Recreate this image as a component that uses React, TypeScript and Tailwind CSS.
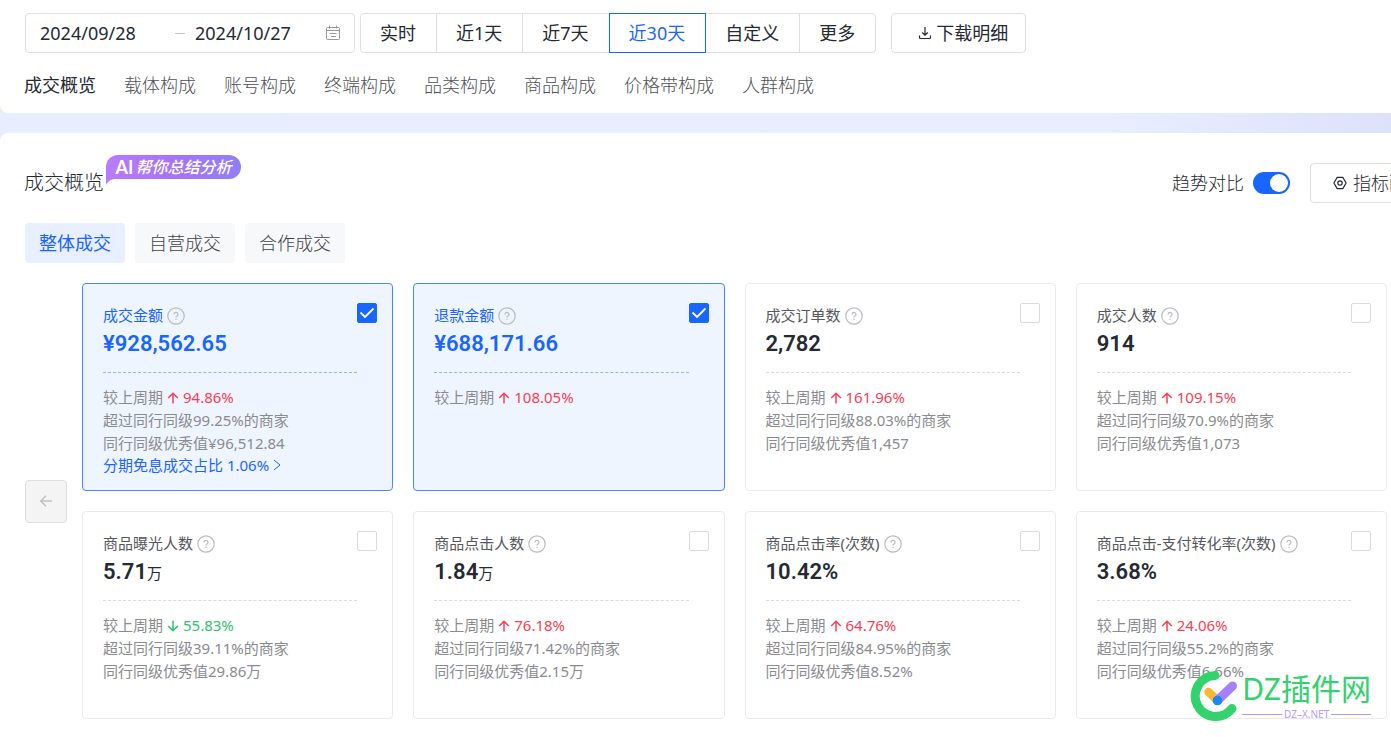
import { useState } from 'react';
import clsx from 'clsx';

interface Metric {
  id: string;
  label: string;
  value: string;
  unit?: string;
  trend: 'up' | 'down';
  change: string;
  lines?: string[];
  link?: string;
}

const RANGES = ['实时', '近1天', '近7天', '近30天', '自定义', '更多'];

const SECTIONS = ['成交概览', '载体构成', '账号构成', '终端构成', '品类构成', '商品构成', '价格带构成', '人群构成'];

const SCOPES = ['整体成交', '自营成交', '合作成交'];

const METRICS: Metric[] = [
  {
    id: 'amount',
    label: '成交金额',
    value: '¥928,562.65',
    trend: 'up',
    change: '94.86%',
    lines: ['超过同行同级99.25%的商家', '同行同级优秀值¥96,512.84'],
    link: '分期免息成交占比 1.06%',
  },
  { id: 'refund', label: '退款金额', value: '¥688,171.66', trend: 'up', change: '108.05%' },
  {
    id: 'orders',
    label: '成交订单数',
    value: '2,782',
    trend: 'up',
    change: '161.96%',
    lines: ['超过同行同级88.03%的商家', '同行同级优秀值1,457'],
  },
  {
    id: 'buyers',
    label: '成交人数',
    value: '914',
    trend: 'up',
    change: '109.15%',
    lines: ['超过同行同级70.9%的商家', '同行同级优秀值1,073'],
  },
  {
    id: 'exposure',
    label: '商品曝光人数',
    value: '5.71',
    unit: '万',
    trend: 'down',
    change: '55.83%',
    lines: ['超过同行同级39.11%的商家', '同行同级优秀值29.86万'],
  },
  {
    id: 'clicks',
    label: '商品点击人数',
    value: '1.84',
    unit: '万',
    trend: 'up',
    change: '76.18%',
    lines: ['超过同行同级71.42%的商家', '同行同级优秀值2.15万'],
  },
  {
    id: 'ctr',
    label: '商品点击率(次数)',
    value: '10.42%',
    trend: 'up',
    change: '64.76%',
    lines: ['超过同行同级84.95%的商家', '同行同级优秀值8.52%'],
  },
  {
    id: 'cvr',
    label: '商品点击-支付转化率(次数)',
    value: '3.68%',
    trend: 'up',
    change: '24.06%',
    lines: ['超过同行同级55.2%的商家', '同行同级优秀值6.66%'],
  },
];

const CalendarIcon = () => (
  <svg viewBox="0 0 16 16" className="h-4 w-4 shrink-0" fill="none" stroke="#96999e" aria-hidden="true">
    <path d="M2.500 2.500h11a1 1 0 0 1 1 1v10a1 1 0 0 1-1 1h-11a1 1 0 0 1-1-1v-10a1 1 0 0 1 1-1zM1.500 5.500h13M4.500 .5v3M11.500 .5v3M4.500 8.500h7M6 11.500h5" />
  </svg>
);

const DownloadIcon = () => (
  <svg viewBox="0 0 14 14" className="h-3.5 w-3.5" fill="none" stroke="currentColor" strokeWidth="1.2" aria-hidden="true">
    <path d="M7 1v8M4.200 6.500 7 9.200l2.800-2.700M1.500 9.500v2a1 1 0 0 0 1 1h9a1 1 0 0 0 1-1v-2" />
  </svg>
);

const SettingIcon = () => (
  <svg viewBox="0 0 14 14" className="h-3.5 w-3.5" fill="none" stroke="currentColor" strokeWidth="1.2" aria-hidden="true">
    <path d="M4.2 1.4h5.6L13.1 7l-3.3 5.6H4.2L.9 7z" strokeLinejoin="round" />
    <circle cx="7" cy="7" r="2.2" />
  </svg>
);

const HelpIcon = () => (
  <svg viewBox="0 0 18 18" className="h-[18px] w-[18px]" fill="none" stroke="#b9bcc1" strokeWidth="1.2" aria-hidden="true">
    <circle cx="9" cy="9" r="8.2" />
    <path d="M7 7.400a2 2 0 1 1 3 1.700c-.7.400-1 .7-1 1.400M9 11.800v1.300" />
  </svg>
);

const TrendArrow = ({ down }: { down: boolean }) => (
  <svg
    viewBox="0 0 12 12"
    className={clsx('mx-1 h-3 w-3', down && 'rotate-180')}
    fill="none"
    stroke="currentColor"
    strokeWidth="1.5"
    aria-hidden="true"
  >
    <path d="M6 11.5V1.5M1.2 6 6 1.2 10.8 6" />
  </svg>
);

const AiBadge = () => (
  <div className="absolute -top-2 left-full ml-0.5 flex h-6 w-[135px] items-center justify-center rounded-r-xl rounded-tl-xl bg-linear-to-r from-[#b87bfb] via-[#a873f6] to-[#9080f8]">
    <svg viewBox="0 0 10 18" className="absolute top-3 left-0 h-[18px] w-2.5" fill="#b87bfb" aria-hidden="true">
      <path d="M0 0h10v12C5 12 2 14 0 18z" />
    </svg>
    <span className="relative flex items-center gap-0.5 text-base leading-6 font-medium whitespace-nowrap text-white italic">
      <b className="font-[Lato,sans-serif] text-lg leading-6 not-italic">AI</b>
      帮你总结分析
    </span>
  </div>
);

const MetricCard = ({ metric, checked, onToggle }: { metric: Metric; checked: boolean; onToggle: () => void }) => {
  const down = metric.trend === 'down';

  return (
    <article
      className={clsx(
        'flex min-h-[208px] items-start rounded border pt-[19px] pr-[15px] pl-5',
        checked ? 'border-[#4b86fb] bg-[#eff5ff]' : 'border-[#e9ebed] bg-white',
      )}
    >
      <div className="min-w-0 flex-1 text-[15px] leading-[23px] font-normal whitespace-nowrap text-[#898b8f]">
        <div className="flex h-[25px] items-center gap-1">
          <label htmlFor={metric.id} className={checked ? 'text-[#1966ff]' : 'text-[#55585c]'}>
            {metric.label}
          </label>
          <HelpIcon />
        </div>
        <div
          className={clsx(
            'flex h-[45px] items-baseline border-b border-dashed font-[Roboto,"Noto_Sans_CJK_SC",sans-serif] text-[22px] leading-8 font-semibold',
            checked ? 'border-[#8fb5f5] text-[#1966ff]' : 'border-[#d9dbde] text-[#252931]',
          )}
        >
          {metric.value}
          {metric.unit && <span className="text-[15px] leading-none font-normal">{metric.unit}</span>}
        </div>
        <div className="mt-[13px] flex items-center">
          较上周期
          <span className={clsx('flex items-center', down ? 'text-[#2fc272]' : 'text-[#fa3e54]')}>
            <TrendArrow down={down} />
            {metric.change}
          </span>
        </div>
        {metric.lines?.map((line) => <p key={line}>{line}</p>)}
        {metric.link && (
          <a href="#installment" className="flex items-center gap-1 leading-5 text-[#1966ff]">
            {metric.link}
            <svg viewBox="0 0 8 12" className="h-3 w-2" fill="none" stroke="currentColor" aria-hidden="true">
              <path d="m1 1 6 5-6 5" />
            </svg>
          </a>
        )}
      </div>
      <div className="relative h-5 w-5 shrink-0">
        <input
          id={metric.id}
          type="checkbox"
          checked={checked}
          onChange={onToggle}
          className="block h-5 w-5 appearance-none rounded-xs border border-[#d9dbde] bg-white checked:border-[#1966ff] checked:bg-[#1966ff]"
        />
        {checked && (
          <svg
            viewBox="0 0 20 20"
            className="pointer-events-none absolute inset-0"
            fill="none"
            stroke="white"
            strokeWidth="1.8"
            aria-hidden="true"
          >
            <path d="m3.500 9.500 4.500 4.500L16.500 5.500" />
          </svg>
        )}
      </div>
    </article>
  );
};

const SiteMark = () => (
  <div className="pointer-events-none absolute right-5 bottom-4 flex items-center gap-1">
    <svg viewBox="0 0 48 50" className="h-[50px] w-12" fill="none" strokeLinecap="round" aria-hidden="true">
      <path d="M25 4.500A20.500 20.500 0 1 0 42 37.500" stroke="#32d26c" strokeWidth="9" />
      <path d="M18.500 21l9 8.500" stroke="#ffb732" strokeWidth="8.500" />
      <path d="M27.500 29.500 42.500 15" stroke="#a582fb" strokeWidth="9" />
      <circle cx="27.500" cy="29.500" r="4.800" fill="#1787fb" />
    </svg>
    <div className="flex flex-col gap-0.5 font-normal">
      <span className="text-3xl leading-[34px] text-[#32d26c]">DZ插件网</span>
      <span className="flex items-center gap-0.5 text-[10px] leading-3 text-[#b49bf8]">
        <i className="h-px flex-1 bg-[#b49bf8]" />
        DZ–X.NET
        <i className="h-px flex-1 bg-[#b49bf8]" />
      </span>
    </div>
  </div>
);

export default function App() {
  const [range, setRange] = useState('近30天');
  const [section, setSection] = useState('成交概览');
  const [scope, setScope] = useState('整体成交');
  const [compare, setCompare] = useState(true);
  const [selected, setSelected] = useState(['amount', 'refund']);

  const toggleMetric = (id: string) => {
    setSelected((prev) => (prev.includes(id) ? prev.filter((item) => item !== id) : [...prev, id]));
  };

  return (
    <div className='relative min-h-screen overflow-x-hidden bg-linear-to-r from-[#e8edff] from-80% to-[#dde2fb] font-["Noto_Sans","Noto_Sans_CJK_SC",sans-serif] text-lg font-light text-[#252931]'>
      <header className="rounded-bl-lg bg-white px-6 pt-[13px] pb-3">
        <div className="flex h-10 pl-px font-normal whitespace-nowrap">
          <div className="flex w-[330px] items-center rounded border border-[#dcdfe3] pr-[13px] pl-[14px]">
            <input aria-label="开始日期" defaultValue="2024/09/28" className="w-[135px] min-w-0 outline-none" />
            <span className="mr-2.5 h-px w-2.5 shrink-0 bg-[#c4c7cb]" />
            <input aria-label="结束日期" defaultValue="2024/10/27" className="min-w-0 flex-1 outline-none" />
            <CalendarIcon />
          </div>
          <div className="ml-[5px] flex">
            {RANGES.map((item) => (
              <button
                key={item}
                type="button"
                onClick={() => setRange(item)}
                className={clsx(
                  '-mr-px border pr-5 pl-[19px] first:rounded-l last:rounded-r',
                  item === range ? 'relative border-[#1966ff] text-[#1966ff]' : 'border-[#dcdfe3]',
                )}
              >
                {item}
              </button>
            ))}
          </div>
          <button type="button" className="ml-4 flex items-center gap-1 rounded border border-[#dcdfe3] pr-[17px] pl-[26px]">
            <DownloadIcon />
            下载明细
          </button>
        </div>
        <nav className="mt-4 flex h-8 items-center gap-7 whitespace-nowrap">
          {SECTIONS.map((item) => (
            <a
              key={item}
              href="#section"
              onClick={() => setSection(item)}
              className={item === section ? 'font-normal text-[#252931]' : 'text-[#4f5156]'}
            >
              {item}
            </a>
          ))}
        </nav>
      </header>

      <main className="mt-5 rounded-tl-lg bg-white pt-[30px] pr-1 pb-[18px] pl-[25px]">
        <div className="flex h-10 items-center whitespace-nowrap">
          <div className="relative -ml-px">
            <h1 className="text-xl leading-10">成交概览</h1>
            <AiBadge />
          </div>
          <label htmlFor="compare" className="ml-auto">
            趋势对比
          </label>
          <input
            id="compare"
            type="checkbox"
            role="switch"
            checked={compare}
            onChange={() => setCompare(!compare)}
            className="mr-5 ml-[9px] flex h-[22px] w-[37px] appearance-none items-center rounded-full bg-[#c9ccd0] px-0.5 before:h-[18px] before:w-[18px] before:rounded-full before:bg-white checked:justify-end checked:bg-[#1966ff]"
          />
          <button
            type="button"
            className="-mr-[61px] flex h-10 items-center gap-1.5 rounded border border-[#dcdfe3] px-[22px]"
          >
            <SettingIcon />
            指标配置
          </button>
        </div>

        <div className="mt-5 flex gap-2.5">
          {SCOPES.map((item) => (
            <button
              key={item}
              type="button"
              onClick={() => setScope(item)}
              className={clsx(
                'h-10 rounded px-3.5',
                item === scope ? 'bg-[#e8f0ff] font-normal text-[#1966ff]' : 'bg-[#f7f8fa] text-[#3f4247]',
              )}
            >
              {item}
            </button>
          ))}
        </div>

        <div className="mt-5 flex items-center gap-[15px]">
          <button
            type="button"
            disabled
            aria-label="上一页"
            className="flex h-[43px] w-[42px] shrink-0 items-center justify-center rounded border border-[#dcdfe1] bg-[#f4f4f5]"
          >
            <svg viewBox="0 0 12 12" className="h-3 w-3" fill="none" stroke="#bfc1c4" strokeWidth="1.5" aria-hidden="true">
              <path d="M12 6H.8M6 .8.8 6 6 11.200" />
            </svg>
          </button>
          <div className="grid flex-1 grid-cols-4 gap-5">
            {METRICS.map((metric) => (
              <MetricCard
                key={metric.id}
                metric={metric}
                checked={selected.includes(metric.id)}
                onToggle={() => toggleMetric(metric.id)}
              />
            ))}
          </div>
        </div>
      </main>
      <SiteMark />
    </div>
  );
}
